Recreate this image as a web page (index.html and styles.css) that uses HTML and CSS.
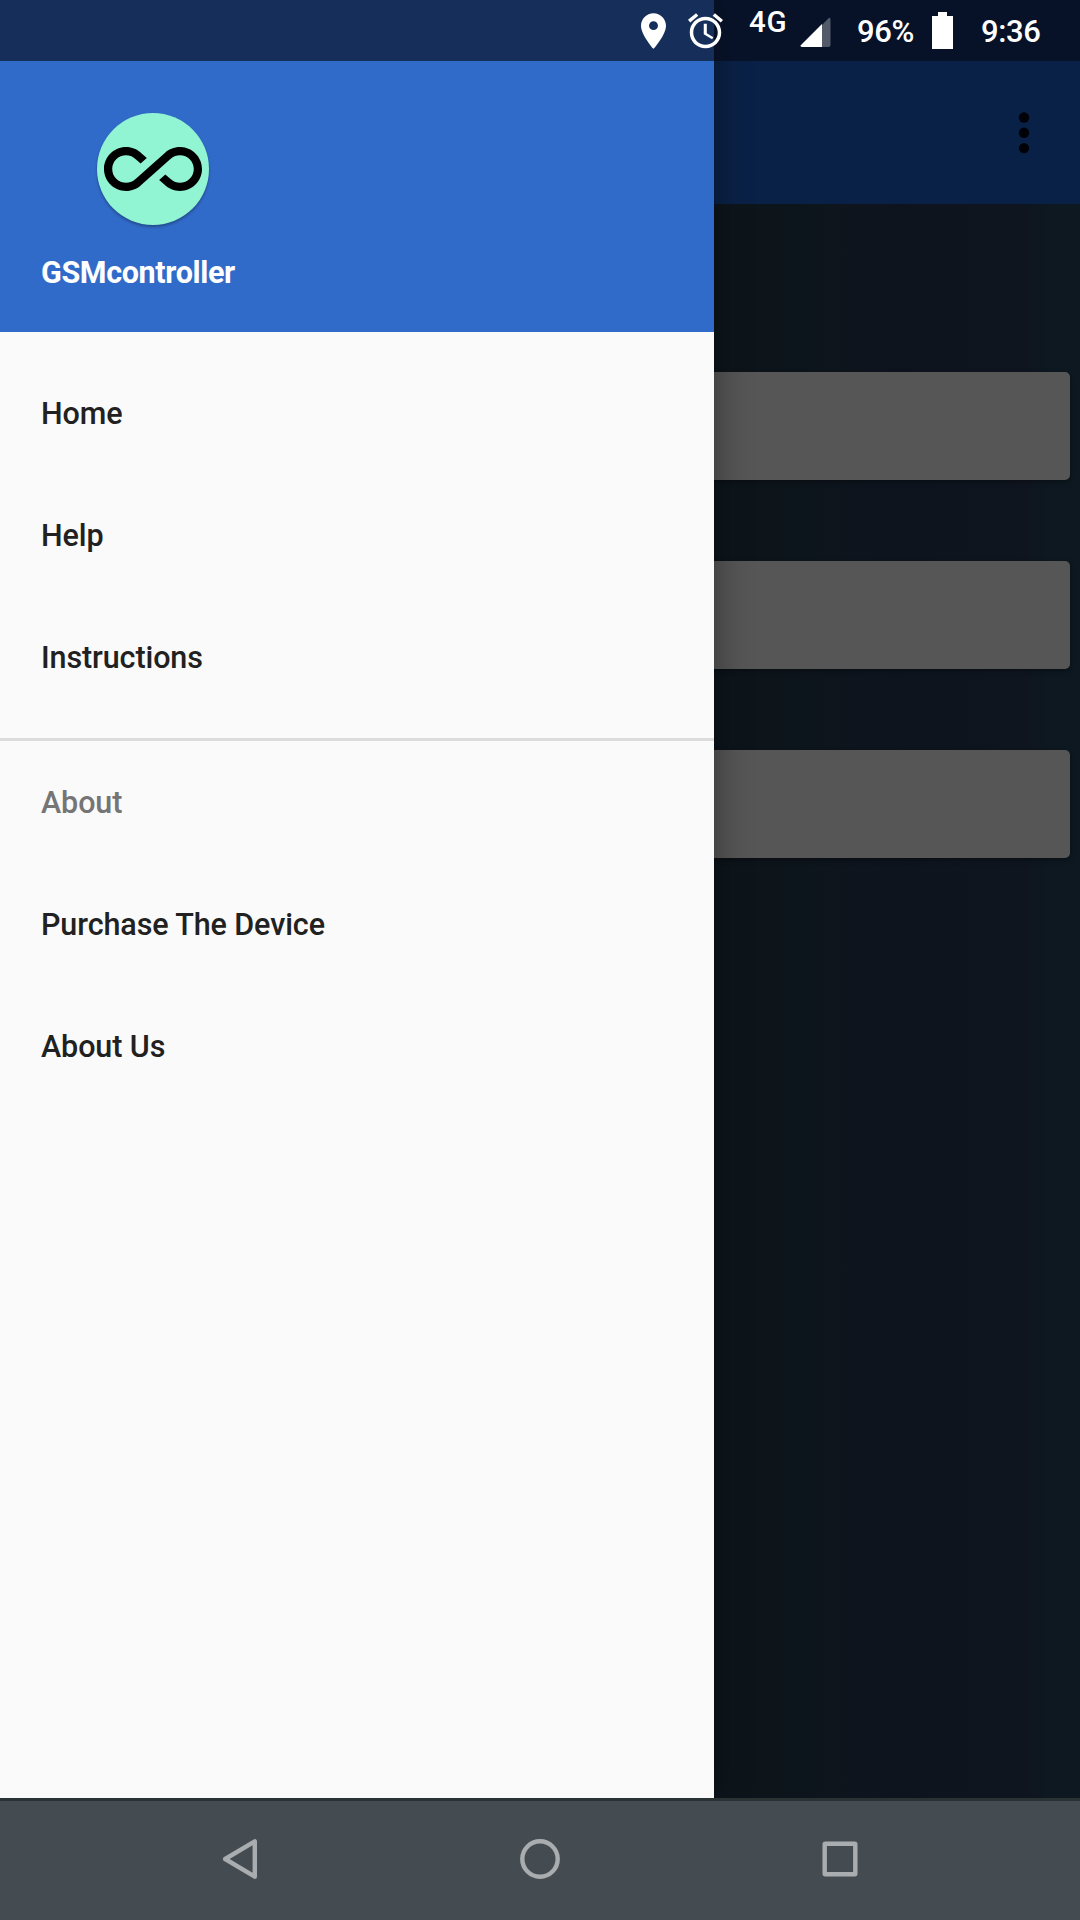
FILE: index.html
```html
<!DOCTYPE html>
<html lang="en">
<head>
<meta charset="utf-8">
<title>GSMcontroller</title>
<link rel="stylesheet" href="styles.css">
</head>
<body>
<div class="screen">
  <div class="app">
    <header class="toolbar">
      <svg class="overflow" viewBox="0 0 12 42"><circle cx="6" cy="5.5" r="5.2"/><circle cx="6" cy="20.8" r="5.2"/><circle cx="6" cy="36.1" r="5.2"/></svg>
    </header>
    <main class="content">
      <div class="card"></div>
      <div class="card"></div>
      <div class="card"></div>
    </main>
  </div>

  <aside class="drawer">
    <div class="drawer-header">
      <div class="logo">
        <svg viewBox="0 6.62 24 10.76"><path d="M18.6 6.62c-1.44 0-2.8.56-3.77 1.53L12 10.66 10.48 12h.01L7.8 14.39c-.64.64-1.49.99-2.4.99-1.87 0-3.39-1.51-3.39-3.38S3.53 8.62 5.4 8.62c.91 0 1.76.35 2.44 1.03l1.13 1 1.51-1.34L9.22 8.2C8.2 7.18 6.84 6.62 5.4 6.62 2.42 6.62 0 9.04 0 12s2.42 5.38 5.4 5.38c1.44 0 2.8-.56 3.77-1.53l2.83-2.5.01.01L13.52 12h-.01l2.69-2.39c.64-.64 1.49-.99 2.4-.99 1.87 0 3.39 1.51 3.39 3.38s-1.52 3.38-3.39 3.38c-.9 0-1.76-.35-2.44-1.03l-1.14-1.01-1.51 1.34 1.27 1.12c1.02 1.01 2.37 1.57 3.82 1.57 2.98 0 5.4-2.41 5.4-5.38s-2.42-5.38-5.4-5.38z"/></svg>
      </div>
      <div class="app-name">GSMcontroller</div>
    </div>
    <nav class="menu">
      <a class="item">Home</a>
      <a class="item">Help</a>
      <a class="item">Instructions</a>
      <hr class="divider">
      <div class="item subheader">About</div>
      <a class="item">Purchase The Device</a>
      <a class="item">About Us</a>
    </nav>
  </aside>

  <div class="status">
    <svg class="pin" viewBox="5 2 14 20"><path d="M12 2C8.130 2 5 5.130 5 9c0 5.250 7 13 7 13s7-7.750 7-13c0-3.870-3.130-7-7-7zm0 9.500a2.500 2.500 0 1 1 0-5 2.500 2.500 0 0 1 0 5z"/></svg>
    <svg class="alarm" viewBox="2 1.860 20 20.140"><path d="M22 5.720l-4.600-3.860-1.290 1.530 4.600 3.860L22 5.720zM7.880 3.390L6.600 1.860 2 5.710l1.290 1.530 4.590-3.850zM12.500 8H11v6l4.750 2.850.75-1.230-3.750-2.250V8zM12 4c-4.970 0-9 4.030-9 9s4.020 9 9 9c4.970 0 9-4.030 9-9s-4.030-9-9-9zm0 16c-3.870 0-7-3.130-7-7s3.130-7 7-7 7 3.130 7 7-3.130 7-7 7z"/></svg>
    <span class="network">4G</span>
    <svg class="signal" viewBox="0 0 31 31"><path class="dim" d="M22 8L28.500 1.200Q30.500 0 30.500 2.500V28q0 2-2 2H22z"/><path d="M22 7v23H2Q-.5 29.600 1 28z"/></svg>
    <span class="percent">96%</span>
    <svg class="battery" viewBox="0 0 21 37"><path d="M6 0h9v4h6v33H0V4h6z"/></svg>
    <span class="clock">9:36</span>
  </div>

  <div class="navbar">
    <svg class="nav-icon" viewBox="0 0 44 44"><path d="M36.800 4.300v35.400L7.200 22z"/></svg>
    <svg class="nav-icon" viewBox="0 0 44 44"><circle cx="22" cy="22" r="17.700"/></svg>
    <svg class="nav-icon" viewBox="0 0 44 44"><rect x="6.700" y="6.700" width="30.600" height="30.600" rx=".5"/></svg>
  </div>
</div>
</body>
</html>
```
FILE: styles.css
```css
* { box-sizing: border-box; }
body { margin: 0; font-family: Roboto, sans-serif; }
svg { display: block; flex: none; }

.screen {
  position: relative;
  display: flex;
  flex-direction: column;
  width: 1080px;
  height: 1920px;
  overflow: hidden;
}

.app {
  flex: 1;
  display: flex;
  flex-direction: column;
  background: linear-gradient(90deg, #0d151b 714px, #0d151c 800px, #0e141e 900px, #0f151f 1025px, #0d1820 1050px, #0d1820);
}
.toolbar {
  display: flex;
  justify-content: flex-end;
  align-items: center;
  height: 204px;
  padding: 61px 50.5px 0 0;
  background: #0a2147;
}
.overflow { width: 12px; height: 42px; fill: #000207; }
.content {
  display: flex;
  flex-direction: column;
  gap: 81px;
  padding: 168px 10px 0;
}
.card {
  height: 108px;
  border-radius: 5px;
  background: #565656;
  box-shadow: 0 2px 5px rgba(0, 0, 0, .35);
}

.drawer {
  position: absolute;
  top: 0;
  left: 0;
  width: 714px;
  height: 1798px;
  background: #fafafa;
  box-shadow: 0 0 34px rgba(0, 0, 0, .4);
}
.drawer-header {
  height: 332px;
  padding: 113px 41px 0;
  background: #316bc9;
  color: #fff;
}
.logo {
  display: flex;
  align-items: center;
  justify-content: center;
  width: 112px;
  height: 112px;
  margin-left: 56px;
  border-radius: 50%;
  background: #91f4d3;
  box-shadow: 0 2px 3px rgba(0, 0, 0, .3);
}
.logo svg { width: 98px; height: 44px; }
.app-name {
  margin-top: 28px;
  font-size: 30.500px;
  font-weight: 700;
  letter-spacing: -.36px;
  line-height: 40px;
}

.menu {
  display: flex;
  flex-direction: column;
  padding-top: 21px;
}
.item {
  height: 122px;
  padding-left: 41px;
  color: #212121;
  font-size: 30.500px;
  font-weight: 500;
  letter-spacing: -.1px;
  line-height: 122px;
}
.subheader { color: #757575; }
.divider {
  width: 100%;
  height: 3px;
  margin: 19px 0 1px;
  border: 0;
  background: #dbdbdb;
}

.status {
  position: absolute;
  top: 0;
  left: 0;
  display: flex;
  align-items: flex-start;
  width: 1080px;
  height: 61px;
  padding-left: 641px;
  background: rgba(6, 9, 22, .62);
  color: #fff;
  fill: #fff;
  font-size: 31px;
  font-weight: 500;
  letter-spacing: -.4px;
  line-height: 36px;
  white-space: nowrap;
}
.pin { width: 25px; height: 36px; margin-top: 12.500px; }
.alarm { width: 35px; height: 35.500px; margin: 13px 0 0 22px; }
.network { width: 50px; margin: 4px 0 0 26px; font-size: 29.500px; letter-spacing: .8px; }
.signal { width: 31px; height: 31px; margin: 17px 0 0 1px; }
.dim { fill: #525a6a; }
.percent { width: 75px; margin: 14px 0 0 26px; }
.battery { width: 21px; height: 37px; margin-top: 12px; }
.clock { margin: 14px 0 0 28px; }

.navbar {
  position: relative;
  flex: none;
  display: flex;
  align-items: center;
  justify-content: center;
  gap: 256px;
  height: 122px;
  padding-bottom: 3px;
  border-top: 3px solid #2b3233;
  background: #454c51;
}
.nav-icon {
  width: 44px;
  height: 44px;
  fill: none;
  stroke: #a9adaf;
  stroke-width: 4.400;
  stroke-linejoin: round;
}
```
